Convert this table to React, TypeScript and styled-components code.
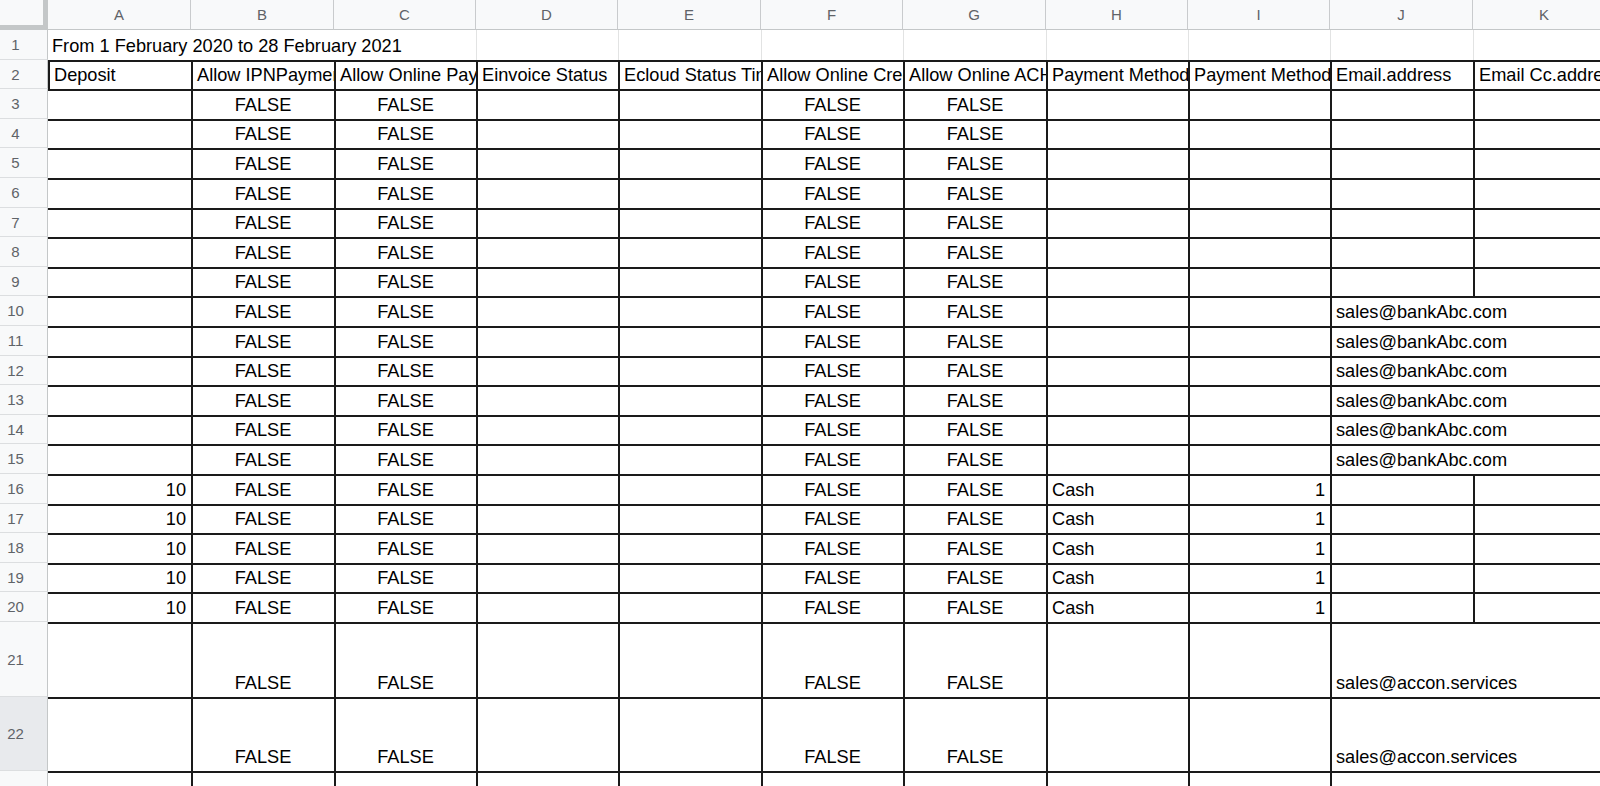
import React from "react";
import styled, { createGlobalStyle } from "styled-components";

const GlobalStyle = createGlobalStyle`
  html, body { margin: 0; padding: 0; background: #ffffff; }
  body { overflow: hidden; font-family: "Liberation Sans", Arial, sans-serif; }
`;

const COLS = [143, 143, 142, 142, 143, 142, 143, 142, 142, 143, 143];
const LETTERS = ["A", "B", "C", "D", "E", "F", "G", "H", "I", "J", "K"];
const TEMPLATE = `48px ${COLS.map((w) => `${w}px`).join(" ")}`;

const Page = styled.div`
  width: 1600px;
  height: 786px;
  overflow: hidden;
  background: #fff;
`;

const Grid = styled.div`
  display: flex;
  flex-direction: column;
  width: max-content;
`;

const Row = styled.div<{ $h: number }>`
  display: grid;
  grid-template-columns: ${TEMPLATE};
  height: ${(p) => p.$h}px;
`;

const Corner = styled.div`
  background: #f8f9fa;
  border-right: 5px solid #c4c7c8;
  border-bottom: 5px solid #c4c7c8;
`;

const ColHeader = styled.div`
  background: #f8f9fa;
  border-right: 1px solid #c9cbcd;
  border-bottom: 1px solid #c4c7c8;
  color: #5f6368;
  font-size: 15px;
  display: flex;
  align-items: center;
  justify-content: center;
  padding-bottom: 1px;
`;

const RowHeader = styled.div<{ $selected?: boolean }>`
  background: ${(p) => (p.$selected ? "#e8eaed" : "#f8f9fa")};
  border-right: 1px solid #c4c7c8;
  border-bottom: 1px solid #dcdee0;
  color: #5f6368;
  font-size: 15px;
  display: flex;
  align-items: center;
  justify-content: center;
  padding-right: 16px;
`;

type Align = "left" | "center" | "right";

const Cell = styled.div<{
  $align?: Align;
  $span?: number;
  $top?: "black" | "none";
  $left?: "black" | "grid" | "none";
}>`
  grid-column: span ${(p) => p.$span ?? 1};
  box-sizing: border-box;
  border-top: ${(p) => (p.$top === "black" ? "2px solid #1a1a1a" : "none")};
  border-left: ${(p) =>
    p.$left === "black"
      ? "2px solid #1a1a1a"
      : p.$left === "grid"
      ? "1px solid #e2e3e3"
      : "none"};
  display: flex;
  align-items: flex-end;
  justify-content: ${(p) =>
    p.$align === "center" ? "center" : p.$align === "right" ? "flex-end" : "flex-start"};
  padding: 0 5px 3px 4px;
  font-size: 18.2px;
  line-height: 22px;
  color: #000;
  white-space: nowrap;
  overflow: hidden;
  min-width: 0;
`;

const CellText = styled.span`
  flex-shrink: 0;
`;

type CellDef = { text?: string; align?: Align; span?: number };

function rowHeight(n: number) {
  return Math.round(30 + n * 29.6) - Math.round(30 + (n - 1) * 29.6);
}

const HEADINGS = [
  "Deposit",
  "Allow IPNPayment",
  "Allow Online Payment",
  "Einvoice Status",
  "Ecloud Status Time",
  "Allow Online Credit",
  "Allow Online ACH",
  "Payment Method",
  "Payment Method ID",
  "Email.address",
  "Email Cc.address",
];

function dataRow(deposit: string, cash: boolean, email?: string): CellDef[] {
  const cells: CellDef[] = [
    { text: deposit, align: "right" },
    { text: "FALSE", align: "center" },
    { text: "FALSE", align: "center" },
    {},
    {},
    { text: "FALSE", align: "center" },
    { text: "FALSE", align: "center" },
    { text: cash ? "Cash" : "" },
    { text: cash ? "1" : "", align: "right" },
  ];
  if (email !== undefined) {
    cells.push({ text: email, span: 2 });
  } else {
    cells.push({}, {});
  }
  return cells;
}

type RowDef = { num: number; h: number; cells: CellDef[]; selected?: boolean };

const rows: RowDef[] = [];
rows.push({ num: 2, h: rowHeight(2), cells: HEADINGS.map((t) => ({ text: t })) });
for (let n = 3; n <= 9; n++) rows.push({ num: n, h: rowHeight(n), cells: dataRow("", false) });
for (let n = 10; n <= 15; n++)
  rows.push({ num: n, h: rowHeight(n), cells: dataRow("", false, "sales@bankAbc.com") });
for (let n = 16; n <= 20; n++) rows.push({ num: n, h: rowHeight(n), cells: dataRow("10", true) });
rows.push({ num: 21, h: 75, cells: dataRow("", false, "sales@accon.services") });
rows.push({ num: 22, h: 74, cells: dataRow("", false, "sales@accon.services"), selected: true });

const emptyTail: CellDef[] = [{}, {}, {}, {}, {}, {}, {}, {}, {}, { span: 2 }];

export default function App() {
  return (
    <Page>
      <GlobalStyle />
      <Grid>
        <Row $h={30}>
          <Corner />
          {LETTERS.map((l) => (
            <ColHeader key={l}>{l}</ColHeader>
          ))}
        </Row>

        <Row $h={rowHeight(1)}>
          <RowHeader>1</RowHeader>
          <Cell $span={3}>
            <CellText>From 1 February 2020 to 28 February 2021</CellText>
          </Cell>
          {LETTERS.slice(3).map((l) => (
            <Cell key={l} $left="grid" />
          ))}
        </Row>

        {rows.map((r) => (
          <Row key={r.num} $h={r.h}>
            <RowHeader $selected={r.selected}>{r.num}</RowHeader>
            {r.cells.map((c, i) => (
              <Cell
                key={i}
                $top="black"
                $left={i === 0 ? (r.num === 2 ? "black" : "none") : "black"}
                $align={c.align}
                $span={c.span}
              >
                {c.text ? <CellText>{c.text}</CellText> : null}
              </Cell>
            ))}
          </Row>
        ))}

        <Row $h={75}>
          <RowHeader>23</RowHeader>
          {emptyTail.map((c, i) => (
            <Cell key={i} $top="black" $left={i === 0 ? "none" : "black"} $span={c.span} />
          ))}
        </Row>
      </Grid>
    </Page>
  );
}
